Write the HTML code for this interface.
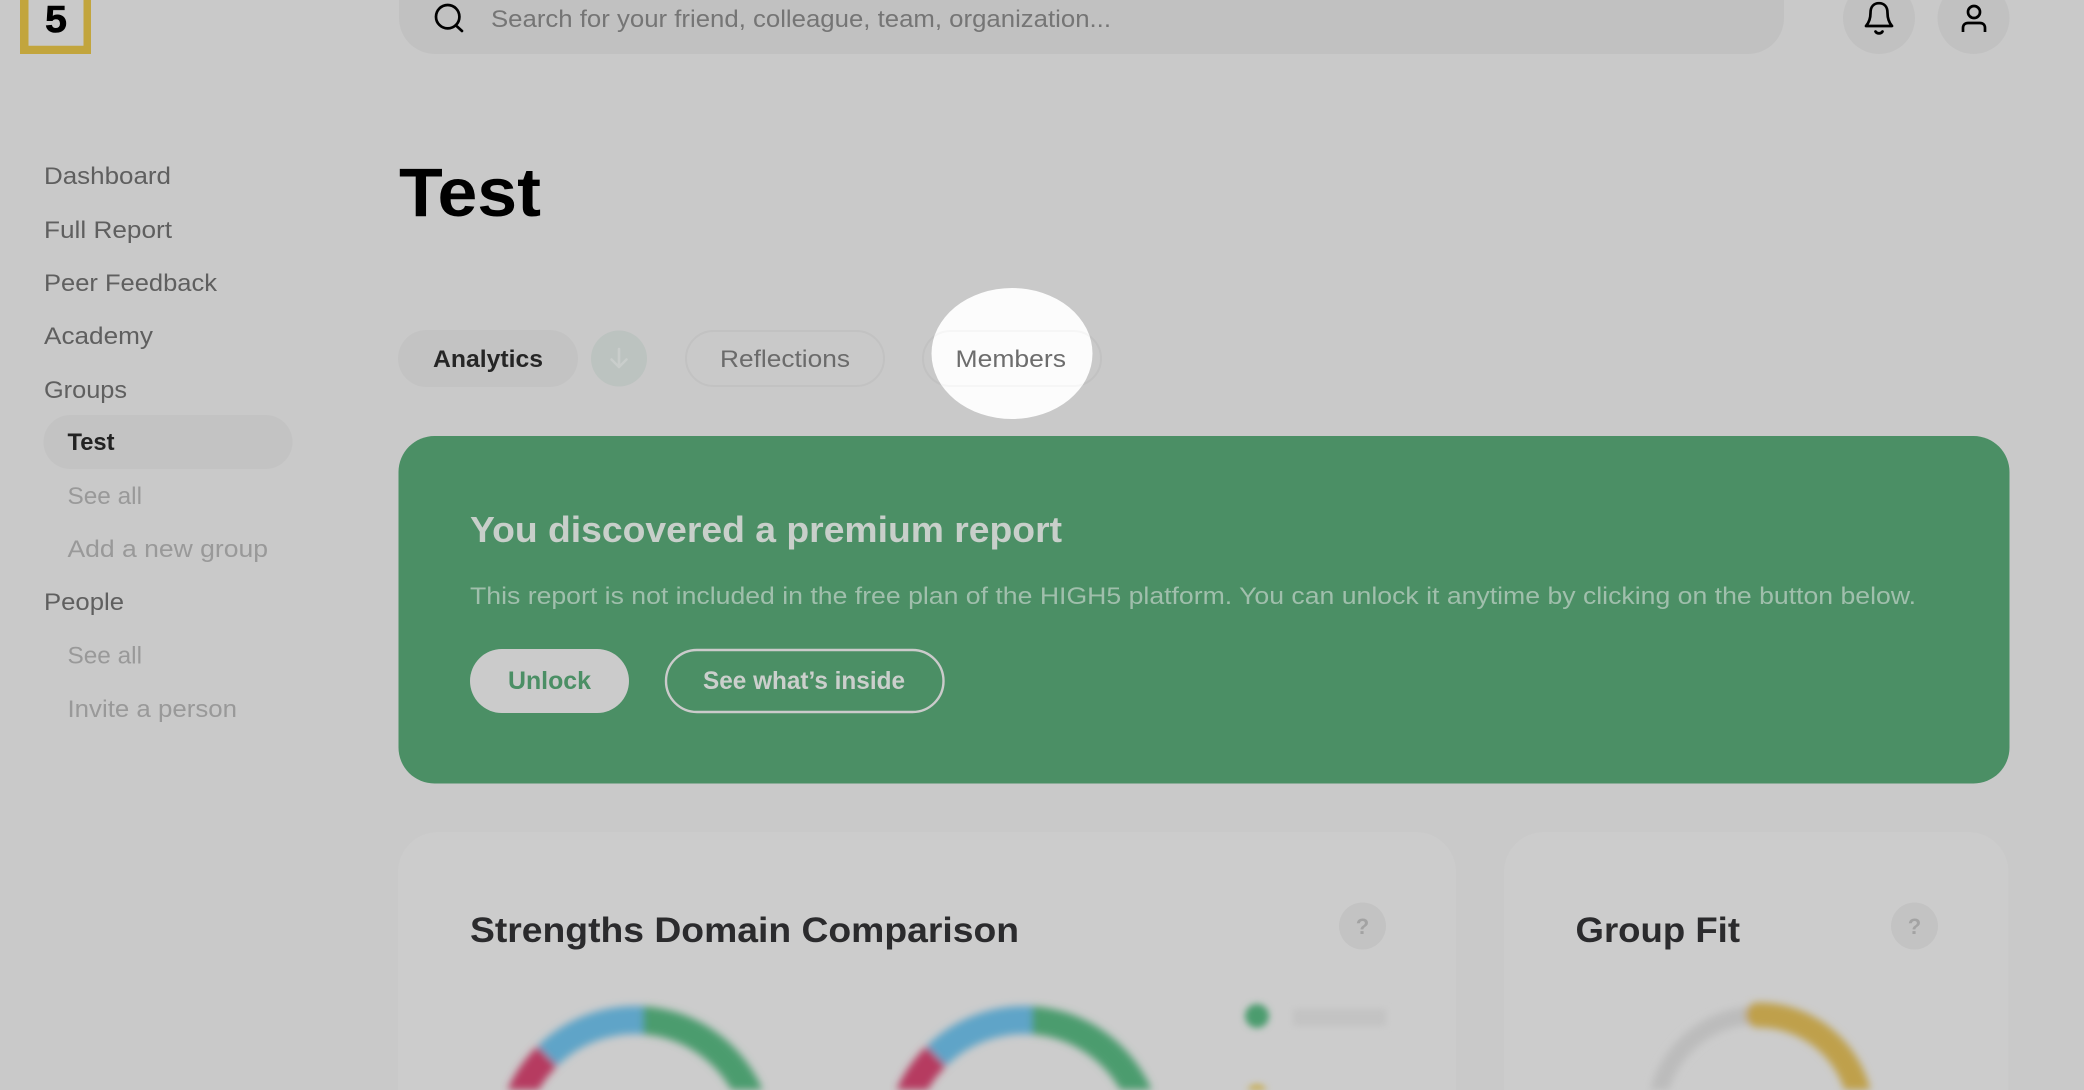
<!DOCTYPE html>
<html lang="en">
<head>
<meta charset="utf-8">
<title>Test</title>
<style>
html,body{margin:0;padding:0;width:2084px;height:1090px;overflow:hidden;background:#c9c9c9}
svg{display:block}
text{font-family:"Liberation Sans",Arial,sans-serif}
</style>
</head>
<body>
<svg width="2084" height="1090" viewBox="0 0 2084 1090" xmlns="http://www.w3.org/2000/svg">
<defs>
<filter id="b" x="-20%" y="-20%" width="140%" height="140%"><feGaussianBlur stdDeviation="4"/></filter>
<filter id="b2" x="-40%" y="-40%" width="180%" height="180%"><feGaussianBlur stdDeviation="3.5"/></filter>
<clipPath id="hl"><ellipse cx="1012" cy="353.5" rx="80.5" ry="65.5"/></clipPath>
</defs>
<rect width="2084" height="1090" fill="#c9c9c9"/>

<!-- logo -->
<path fill-rule="evenodd" d="M20 0H91V54H20ZM28.5 0V45.7H83.5V0Z" fill="#c2a53d"/>
<text x="45" y="32" font-size="38" font-weight="700" fill="#000" stroke="#000" stroke-width="0.6" textLength="22" lengthAdjust="spacingAndGlyphs">5</text>

<!-- search -->
<path d="M399 0H1784V18A36 36 0 0 1 1748 54H435A36 36 0 0 1 399 18Z" fill="#c1c1c1"/>
<circle cx="447.7" cy="16.7" r="11.7" fill="none" stroke="#000" stroke-width="2.7"/>
<path d="M456 25.5L462 31" fill="none" stroke="#000" stroke-width="2.7" stroke-linecap="round"/>
<text x="491" y="27" font-size="24" fill="#757575" textLength="620" lengthAdjust="spacingAndGlyphs">Search for your friend, colleague, team, organization...</text>

<!-- top icons -->
<circle cx="1879" cy="18" r="36" fill="#c1c1c1"/>
<circle cx="1973.5" cy="18" r="36" fill="#c1c1c1"/>
<path d="M1866 26C1869.5 22 1870.5 18 1870.5 13C1870.5 6.5 1874 3.2 1879 3.2C1884 3.2 1887.5 6.5 1887.5 13C1887.5 18 1888.5 22 1892 26Z" fill="none" stroke="#000" stroke-width="2.7" stroke-linejoin="round"/>
<path d="M1875.5 31.5C1877 34 1881 34 1882.5 31.5" fill="none" stroke="#000" stroke-width="2.7" stroke-linecap="round"/>
<circle cx="1974" cy="12" r="6" fill="none" stroke="#000" stroke-width="2.7"/>
<path d="M1963 32V28C1963 24.5 1965.5 23 1968 23H1980C1982.5 23 1985 24.5 1985 28V32" fill="none" stroke="#000" stroke-width="2.7"/>

<!-- sidebar -->
<g font-size="24" fill="#5f5f5f">
<text x="44" y="184" textLength="127" lengthAdjust="spacingAndGlyphs">Dashboard</text>
<text x="44" y="238" textLength="128" lengthAdjust="spacingAndGlyphs">Full Report</text>
<text x="44" y="291" textLength="173" lengthAdjust="spacingAndGlyphs">Peer Feedback</text>
<text x="44" y="344" textLength="109" lengthAdjust="spacingAndGlyphs">Academy</text>
<text x="44" y="398" textLength="83" lengthAdjust="spacingAndGlyphs">Groups</text>
<text x="44" y="610" textLength="80" lengthAdjust="spacingAndGlyphs">People</text>
</g>
<rect x="43.5" y="415" width="249" height="54" rx="27" fill="#c3c3c3"/>
<text x="67.5" y="450" font-size="24" font-weight="700" fill="#222" textLength="47" lengthAdjust="spacingAndGlyphs">Test</text>
<g font-size="24" fill="#999">
<text x="67.5" y="504" textLength="74.5" lengthAdjust="spacingAndGlyphs">See all</text>
<text x="67.5" y="557" textLength="200.5" lengthAdjust="spacingAndGlyphs">Add a new group</text>
<text x="67.5" y="663.5" textLength="74.5" lengthAdjust="spacingAndGlyphs">See all</text>
<text x="67.5" y="717" textLength="169.5" lengthAdjust="spacingAndGlyphs">Invite a person</text>
</g>

<!-- title -->
<text x="399" y="216" font-size="69" font-weight="700" fill="#000" textLength="142" lengthAdjust="spacingAndGlyphs">Test</text>

<!-- tabs -->
<rect x="398" y="330" width="180" height="57" rx="28.5" fill="#c3c3c3"/>
<text x="433" y="367" font-size="24" font-weight="700" fill="#262626" textLength="110" lengthAdjust="spacingAndGlyphs">Analytics</text>
<circle cx="619" cy="358.5" r="28" fill="#bcc3c0"/>
<path d="M619 349V367M611.5 359.5L619 367L626.5 359.5" fill="none" stroke="#c9cdcb" stroke-width="2.6" stroke-linecap="round" stroke-linejoin="round"/>
<rect x="686" y="331" width="198" height="55" rx="27.5" fill="none" stroke="#c2c2c2" stroke-width="2"/>
<text x="720" y="367" font-size="24" fill="#6b6b6b" textLength="130" lengthAdjust="spacingAndGlyphs">Reflections</text>
<rect x="923" y="331" width="178" height="55" rx="27.5" fill="none" stroke="#c2c2c2" stroke-width="2"/>
<ellipse cx="1012" cy="353.5" rx="80.5" ry="65.5" fill="#fcfcfc"/>
<rect x="923" y="331" width="178" height="55" rx="27.5" fill="none" stroke="#f6f6f6" stroke-width="2" clip-path="url(#hl)"/>
<text x="955.5" y="367" font-size="24" fill="#6d6d6d" textLength="110.5" lengthAdjust="spacingAndGlyphs">Members</text>

<!-- banner -->
<rect x="398.5" y="436" width="1611" height="347.5" rx="36" fill="#4b8f65"/>
<text x="470" y="542" font-size="36" font-weight="700" fill="#c8cfca" textLength="592" lengthAdjust="spacingAndGlyphs">You discovered a premium report</text>
<text x="470" y="604" font-size="24" fill="#a0bfac" textLength="1446" lengthAdjust="spacingAndGlyphs">This report is not included in the free plan of the HIGH5 platform. You can unlock it anytime by clicking on the button below.</text>
<rect x="470" y="649" width="159" height="64" rx="32" fill="#cbcbcb"/>
<text x="508" y="689" font-size="25" font-weight="700" fill="#4b8f65" textLength="83" lengthAdjust="spacingAndGlyphs">Unlock</text>
<rect x="666" y="650" width="277.5" height="62" rx="31" fill="none" stroke="#cbcbcb" stroke-width="2.4"/>
<text x="703" y="689" font-size="25" font-weight="700" fill="#cbcfcc" textLength="202" lengthAdjust="spacingAndGlyphs">See what’s inside</text>

<!-- cards -->
<path d="M398 1090V872A40 40 0 0 1 438 832H1416A40 40 0 0 1 1456 872V1090Z" fill="#cccccc"/>
<path d="M1504 1090V872A40 40 0 0 1 1544 832H1968.5A40 40 0 0 1 2008.5 872V1090Z" fill="#cccccc"/>

<text x="470" y="942" font-size="35" font-weight="700" fill="#2b2b2d" textLength="549" lengthAdjust="spacingAndGlyphs">Strengths Domain Comparison</text>
<circle cx="1362.5" cy="926" r="23.5" fill="#c3c3c3"/>
<text x="1362.5" y="934" font-size="22" font-weight="700" fill="#a3a3a3" text-anchor="middle">?</text>

<text x="1575.5" y="942" font-size="35" font-weight="700" fill="#2b2b2d" textLength="164.5" lengthAdjust="spacingAndGlyphs">Group Fit</text>
<circle cx="1914.5" cy="926" r="23.5" fill="#c3c3c3"/>
<text x="1914.5" y="934" font-size="22" font-weight="700" fill="#a3a3a3" text-anchor="middle">?</text>

<!-- blurred donuts -->
<g filter="url(#b)">
<path d="M643 1006.2A139 139 0 0 1 762.7 1090H731.4A111 111 0 0 0 643 1034.3Z" fill="#4c9c6e"/>
<path d="M537.3 1046.2A139 139 0 0 1 643 1006.2V1034.3A111 111 0 0 0 557 1066.1Z" fill="#5ea4c8"/>
<path d="M507.3 1090A139 139 0 0 1 537.3 1046.2L557 1066.1A111 111 0 0 0 538.6 1090Z" fill="#b63a60"/>
</g>
<g filter="url(#b)" transform="translate(389 0)">
<path d="M643 1006.2A139 139 0 0 1 762.7 1090H731.4A111 111 0 0 0 643 1034.3Z" fill="#4c9c6e"/>
<path d="M537.3 1046.2A139 139 0 0 1 643 1006.2V1034.3A111 111 0 0 0 557 1066.1Z" fill="#5ea4c8"/>
<path d="M507.3 1090A139 139 0 0 1 537.3 1046.2L557 1066.1A111 111 0 0 0 538.6 1090Z" fill="#b63a60"/>
</g>

<!-- blurred legend -->
<g filter="url(#b2)">
<circle cx="1257" cy="1016" r="12" fill="#4c9c6e"/>
<rect x="1293" y="1009" width="93" height="17" fill="#c3c3c3"/>
<path d="M1247 1090A12 12 0 0 1 1267 1090Z" fill="#c8a83a"/>
</g>

<!-- blurred gauge -->
<g filter="url(#b)">
<path d="M1650.1 1090A112 112 0 0 1 1758 1006V1024A94 94 0 0 0 1668.8 1090Z" fill="#bcbcbc"/>
<path d="M1758 1002.5A115.5 115.5 0 0 1 1870.5 1090H1844.5A90.5 90.5 0 0 0 1758 1027.5A12.5 12.5 0 0 1 1758 1002.5Z" fill="#bfa04c"/>
</g>
</svg>
</body>
</html>
